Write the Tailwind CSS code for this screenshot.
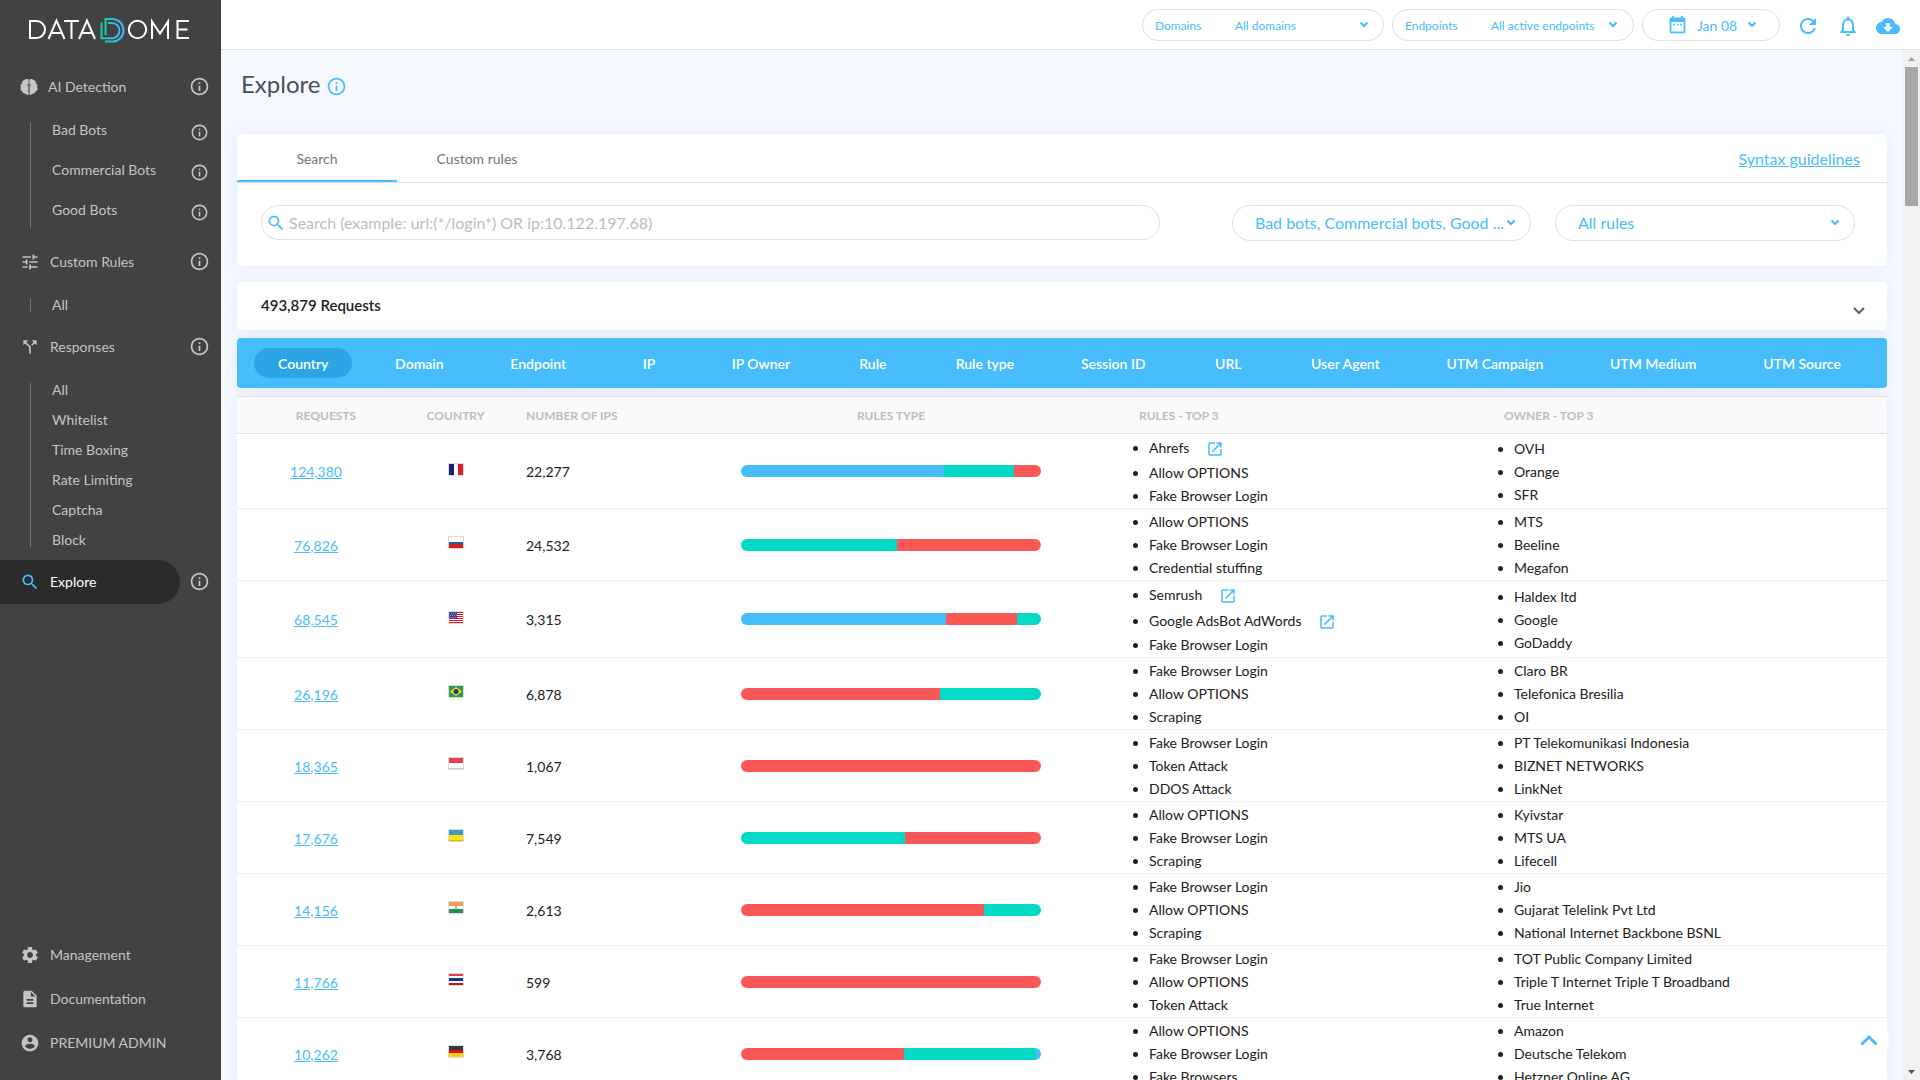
<!DOCTYPE html>
<html lang="en">
<head>
  <meta charset="UTF-8">
  <meta name="viewport" content="width=device-width, initial-scale=1.0">
  <title>DataDome - Explore</title>
  <script src="https://cdn.jsdelivr.net/npm/@tailwindcss/browser@4"></script>
</head>
<body class="h-screen overflow-hidden bg-[#f5f9ff] font-['Lato',sans-serif] text-sm text-[#212121]">
  <!-- Shared icons -->
  <svg class="hidden" aria-hidden="true">
    <symbol id="info" viewBox="0 0 24 24"><path d="M11 17h2v-6h-2v6zm1-15C6.480 2 2 6.480 2 12s4.480 10 10 10 10-4.480 10-10S17.520 2 12 2zm0 18c-4.410 0-8-3.590-8-8s3.590-8 8-8 8 3.590 8 8-3.590 8-8 8zM11 9h2V7h-2v2z"/></symbol>
    <symbol id="search" viewBox="0 0 24 24"><path d="M15.500 14h-.79l-.28-.27A6.471 6.471 0 0 0 16 9.500 6.500 6.500 0 1 0 9.500 16c1.610 0 3.090-.59 4.230-1.570l.27.28v.79l5 4.990L20.490 19l-4.990-5zm-6 0C7.010 14 5 11.990 5 9.500S7.010 5 9.500 5 14 7.010 14 9.500 11.990 14 9.500 14z"/></symbol>
    <symbol id="chevron" viewBox="0 0 10 10"><path d="M1.500 2.500L5 6l3.500-3.500" fill="none" stroke="currentColor" stroke-width="2.200"/></symbol>
    <symbol id="launch" viewBox="0 0 24 24"><path d="M19 19H5V5h7V3H5a2 2 0 0 0-2 2v14a2 2 0 0 0 2 2h14c1.100 0 2-.9 2-2v-7h-2v7zM14 3v2h3.590l-9.830 9.830 1.410 1.410L19 6.410V10h2V3h-7z"/></symbol>
  </svg>

  <div class="flex h-full">
    <!-- Sidebar -->
    <aside class="flex w-[221px] shrink-0 flex-col bg-[#424242] text-[#c4c4c4]">
      <a href="#" aria-label="DataDome" class="flex h-[65px] shrink-0 pt-[17px] pl-7">
        <svg class="h-[27px] w-[164px]" viewBox="0 0 164 27" fill="none" stroke="#fff" stroke-width="2">
          <defs><linearGradient id="dome" x1="0" x2="1"><stop offset="0" stop-color="#14cdb4"/><stop offset="1" stop-color="#46b4fa"/></linearGradient></defs>
          <path d="M2 4h6.500a8.500 8.500 0 0 1 0 17H2z"/>
          <path d="M20.500 22l8-18.500 8 18.500M23.500 16h10M36 4h15M43.500 4v18M51 22l8-18.500L67 22M54 16h10"/>
          <g stroke="url(#dome)" stroke-width="2">
            <path d="M77.500 18V2h7a11 11.300 0 0 1 0 22.600H77"/>
            <path d="M73.500 5.500v15.800h10.500a7.500 7.700 0 0 0 0-15.400H80"/>
          </g>
          <circle cx="109.500" cy="12.500" r="8.700"/>
          <path d="M124 22V4.500l8 12 8-12V22M161 4h-11.500v17H161M149.500 12.500h10"/>
        </svg>
      </a>
      <nav>
        <div class="flex h-11 items-center pr-[11px] pl-5">
          <svg class="mr-2.5 size-[18px]" viewBox="0 0 18 18" fill="currentColor"><path d="M8.700 1.500C7.700.5 5 .8 4.500 2 2.500 2.200 1.800 4 2.200 5 .5 6 .2 8 .8 9.300 0 11 .5 13 2.300 13.600 3 15.500 4.500 16 5.500 15.800c1 1.200 2.700 1.200 3.200.4zM9.300 1.500c1-1 3.700-.7 4.200.5 2 .2 2.700 2 2.300 3 1.700 1 2 3 1.400 4.300.8 1.700.3 3.700-1.500 4.300-.7 1.900-2.200 2.400-3.200 2.200-1 1.200-2.700 1.200-3.200.4z"/><path d="M7 7.500L9 6l2 1.500M9 6v9" stroke="#424242" fill="none" stroke-width=".8"/></svg>
          <a href="#" class="grow">AI Detection</a>
          <svg class="mb-0.5 size-[21px] fill-current"><use href="#info"/></svg>
        </div>
        <div class="mt-px mb-2.5 flex pl-[30px]">
          <div class="mt-3 mb-0.5 w-px bg-[#757575]"></div>
          <ul class="grow pr-3 pl-[21px] leading-10">
            <li class="flex items-center"><a href="#" class="grow">Bad Bots</a><svg class="mt-1 size-[19px] fill-current"><use href="#info"/></svg></li>
            <li class="flex items-center"><a href="#" class="grow">Commercial Bots</a><svg class="mt-1 size-[19px] fill-current"><use href="#info"/></svg></li>
            <li class="flex items-center"><a href="#" class="grow">Good Bots</a><svg class="mt-1 size-[19px] fill-current"><use href="#info"/></svg></li>
          </ul>
        </div>
        <div class="flex h-11 items-center pr-[11px] pl-5">
          <svg class="mr-2.5 size-5 fill-current" viewBox="0 0 24 24"><path d="M3 17v2h6v-2H3zM3 5v2h10V5H3zm10 16v-2h8v-2h-8v-2h-2v6h2zM7 9v2H3v2h4v2h2V9H7zm14 4v-2H11v2h10zm-6-4h2V7h4V5h-4V3h-2v6z"/></svg>
          <a href="#" class="grow">Custom Rules</a>
          <svg class="mb-0.5 size-[21px] fill-current"><use href="#info"/></svg>
        </div>
        <div class="mt-1.5 mb-[5px] flex pl-[30px]">
          <div class="my-2 w-px bg-[#757575]"></div>
          <ul class="grow pl-[21px] leading-[30px]"><li><a href="#">All</a></li></ul>
        </div>
        <div class="flex h-11 items-center pr-[11px] pl-5">
          <svg class="mr-2.5 size-5 fill-current" viewBox="0 0 24 24"><path d="M14 4l2.290 2.290-2.880 2.880 1.420 1.420 2.880-2.880L20 10V4h-6zm-4 0H4v6l2.290-2.290 4.710 4.700V20h2v-8.410l-5.290-5.300L10 4z"/></svg>
          <a href="#" class="grow">Responses</a>
          <svg class="mb-0.5 size-[21px] fill-current"><use href="#info"/></svg>
        </div>
        <div class="mt-1.5 mb-[5px] flex pl-[30px]">
          <div class="my-2 w-px bg-[#757575]"></div>
          <ul class="grow pl-[21px] leading-[30px]">
            <li><a href="#">All</a></li>
            <li><a href="#">Whitelist</a></li>
            <li><a href="#">Time Boxing</a></li>
            <li><a href="#">Rate Limiting</a></li>
            <li><a href="#">Captcha</a></li>
            <li><a href="#">Block</a></li>
          </ul>
        </div>
        <div class="flex items-center justify-between pr-[11px]">
          <a href="#" class="flex h-11 w-[180px] items-center rounded-r-full bg-[#2b2b2b] pl-5 text-white">
            <svg class="mr-2.5 size-5 fill-[#47bdfc]"><use href="#search"/></svg>
            Explore
          </a>
          <svg class="mb-0.5 size-[21px] fill-current"><use href="#info"/></svg>
        </div>
      </nav>
      <ul class="mt-auto mb-[15px]">
        <li><a href="#" class="flex h-11 items-center pl-5">
          <svg class="mr-2.5 size-5 fill-current" viewBox="0 0 24 24"><path d="M19.140 12.940c.04-.3.06-.61.06-.94 0-.32-.02-.64-.07-.94l2.030-1.580a.49.49 0 0 0 .12-.61l-1.920-3.320a.488.488 0 0 0-.59-.22l-2.390.96c-.5-.38-1.030-.7-1.620-.94l-.36-2.540a.484.484 0 0 0-.48-.41h-3.840c-.24 0-.43.17-.47.41l-.36 2.540c-.59.24-1.130.57-1.620.94l-2.390-.96c-.22-.08-.47 0-.59.22L2.740 8.870c-.12.21-.08.47.12.61l2.030 1.580c-.05.3-.09.63-.09.94s.02.64.07.94l-2.030 1.580a.49.49 0 0 0-.12.61l1.920 3.320c.12.22.37.29.59.22l2.390-.96c.5.38 1.030.7 1.620.94l.36 2.540c.05.24.24.41.48.41h3.840c.24 0 .44-.17.47-.41l.36-2.540c.59-.24 1.130-.56 1.620-.94l2.390.96c.22.08.47 0 .59-.22l1.920-3.320c.12-.22.07-.47-.12-.61l-2.010-1.580zM12 15.600c-1.980 0-3.600-1.620-3.600-3.600s1.620-3.600 3.600-3.600 3.600 1.620 3.600 3.600-1.620 3.600-3.600 3.600z"/></svg>
          Management
        </a></li>
        <li><a href="#" class="flex h-11 items-center pl-5">
          <svg class="mr-2.5 size-5 fill-current" viewBox="0 0 24 24"><path d="M14 2H6c-1.100 0-2 .9-2 2v16c0 1.100.9 2 2 2h12c1.100 0 2-.9 2-2V8l-6-6zm2 16H8v-2h8v2zm0-4H8v-2h8v2zm-3-5V3.500L18.500 9H13z"/></svg>
          Documentation
        </a></li>
        <li><a href="#" class="flex h-11 items-center pl-5">
          <svg class="mr-2.5 size-5 fill-current" viewBox="0 0 24 24"><path d="M12 2C6.480 2 2 6.480 2 12s4.480 10 10 10 10-4.480 10-10S17.520 2 12 2zm0 3c1.660 0 3 1.340 3 3s-1.340 3-3 3-3-1.340-3-3 1.340-3 3-3zm0 14.200a7.200 7.200 0 0 1-6-3.220c.03-1.990 4-3.080 6-3.080 1.990 0 5.970 1.090 6 3.080a7.200 7.200 0 0 1-6 3.220z"/></svg>
          PREMIUM ADMIN
        </a></li>
      </ul>
    </aside>

    <div class="flex min-w-0 grow flex-col">
      <!-- Top bar -->
      <header class="flex h-[50px] shrink-0 items-center justify-end gap-2 border-b border-[#e0e0e0] bg-white pr-5 text-xs text-[#47bdfc]">
        <button class="flex h-8 w-[242px] items-center rounded-full border border-[#e0e0e0] pr-3.5 pl-3">
          <span class="w-20 pt-0.5 text-left">Domains</span>
          <span class="grow pt-0.5 text-left">All domains</span>
          <svg class="size-2.5"><use href="#chevron"/></svg>
        </button>
        <button class="flex h-8 w-[242px] items-center rounded-full border border-[#e0e0e0] pr-[15px] pl-3">
          <span class="w-[86px] pt-0.5 text-left">Endpoints</span>
          <span class="grow pt-0.5 text-left">All active endpoints</span>
          <svg class="size-2.5"><use href="#chevron"/></svg>
        </button>
        <button class="mr-2 flex h-8 w-[138px] items-center rounded-full border border-[#e0e0e0] pl-6 text-sm">
          <svg class="mr-[9px] size-[21px] fill-current" viewBox="0 0 24 24"><path d="M9 11H7v2h2v-2zm4 0h-2v2h2v-2zm4 0h-2v2h2v-2zm2-7h-1V2h-2v2H8V2H6v2H5c-1.110 0-1.990.9-1.990 2L3 20a2 2 0 0 0 2 2h14c1.100 0 2-.9 2-2V6c0-1.100-.9-2-2-2zm0 16H5V9h14v11z"/></svg>
          <span class="pt-0.5">Jan 08</span>
          <svg class="ml-2.5 size-2.5"><use href="#chevron"/></svg>
        </button>
        <div class="flex items-center gap-4 pt-0.5">
          <button aria-label="Refresh"><svg class="size-6 fill-current" viewBox="0 0 24 24"><path d="M17.650 6.350A7.958 7.958 0 0 0 12 4c-4.420 0-7.990 3.580-7.990 8s3.570 8 7.990 8c3.730 0 6.840-2.550 7.730-6h-2.080A5.990 5.990 0 0 1 12 18c-3.310 0-6-2.690-6-6s2.690-6 6-6c1.660 0 3.140.69 4.220 1.780L13 11h7V4l-2.350 2.350z"/></svg></button>
          <button aria-label="Notifications"><svg class="size-6 fill-current" viewBox="0 0 24 24"><path d="M12 22c1.100 0 2-.9 2-2h-4c0 1.100.9 2 2 2zm6-6v-5c0-3.070-1.630-5.640-4.500-6.320V4c0-.83-.67-1.500-1.500-1.500s-1.500.67-1.500 1.500v.68C7.640 5.360 6 7.920 6 11v5l-2 2v1h16v-1l-2-2zm-2 1H8v-6c0-2.480 1.510-4.500 4-4.500s4 2.020 4 4.500v6z"/></svg></button>
          <button aria-label="Download"><svg class="size-6 fill-current" viewBox="0 0 24 24"><path d="M19.350 10.040A7.490 7.490 0 0 0 12 4C9.110 4 6.600 5.640 5.350 8.040A5.994 5.994 0 0 0 0 14c0 3.310 2.690 6 6 6h13c2.760 0 5-2.240 5-5 0-2.640-2.050-4.780-4.650-4.960zM17 13l-5 5-5-5h3V9h4v4h3z"/></svg></button>
        </div>
      </header>

      <div class="flex min-h-0 grow">
        <main class="min-w-0 grow overflow-hidden px-4">
          <div class="flex h-[84px] items-start gap-1.5 pt-[18px] pl-1">
            <h1 class="text-2xl leading-8 text-[#4a4f57]">Explore</h1>
            <svg class="mt-2 size-[21px] fill-[#47bdfc]"><use href="#info"/></svg>
          </div>

          <!-- Search -->
          <section class="mb-4 h-[132px] rounded bg-white shadow-[0_0_16px_rgba(40,50,150,0.08)]">
            <div class="flex h-[49px] items-center border-b border-[#e0e0e0] text-[#757575]">
              <button class="h-12 w-40 border-b-2 border-[#47bdfc] pt-1">Search</button>
              <button class="h-12 w-40 pt-0.5">Custom rules</button>
              <a href="#" class="mr-[27px] ml-auto pt-0.5 text-base text-[#47bdfc] underline">Syntax guidelines</a>
            </div>
            <div class="flex items-start pt-[22px] pr-8 pl-6">
              <label class="flex h-[35px] w-[899px] shrink items-center rounded-full border border-[#e0e0e0] pl-1">
                <svg class="mr-[3px] size-5 shrink-0 fill-[#47bdfc]"><use href="#search"/></svg>
                <input type="text" aria-label="Search" placeholder="Search (example: url:(*/login*) OR ip:10.122.197.68)" class="min-w-0 grow text-base outline-none placeholder:text-[#bdbdbd]">
              </label>
              <button class="ml-auto flex h-9 w-[299px] items-center justify-between rounded-full border border-[#e0e0e0] pr-3.5 pl-[22px] text-base text-[#47bdfc]">
                <span class="truncate">Bad bots, Commercial bots, Good ...</span>
                <svg class="size-2.5 shrink-0"><use href="#chevron"/></svg>
              </button>
              <button class="ml-6 flex h-9 w-[300px] items-center justify-between rounded-full border border-[#e0e0e0] pr-3.5 pl-[22px] text-base text-[#47bdfc]">
                <span>All rules</span>
                <svg class="size-2.5 shrink-0"><use href="#chevron"/></svg>
              </button>
            </div>
          </section>

          <section class="mb-2 flex h-12 items-center justify-between rounded bg-white pr-5 pl-6 shadow-[0_0_16px_rgba(40,50,150,0.08)]">
            <h2 class="text-[15px] font-semibold">493,879 Requests</h2>
            <button aria-label="Expand"><svg class="mt-2.5 size-4 text-[#616161]" viewBox="0 0 16 16"><path d="M3 5l5 5 5-5" fill="none" stroke="currentColor" stroke-width="2"/></svg></button>
          </section>

          <!-- Group by -->
          <div class="mb-2 flex h-[50px] items-center justify-between rounded bg-[#47bdfc] pr-[22px] pl-[17px] font-semibold text-white shadow-[0_0_16px_rgba(40,50,150,0.08)]">
            <button class="h-[30px] min-w-20 rounded-full bg-[#2ba5e5] px-6 pt-0.5">Country</button>
            <button class="h-[30px] min-w-20 px-6 pt-0.5">Domain</button>
            <button class="h-[30px] min-w-20 px-6 pt-0.5">Endpoint</button>
            <button class="h-[30px] min-w-20 px-6 pt-0.5">IP</button>
            <button class="h-[30px] min-w-20 px-6 pt-0.5">IP Owner</button>
            <button class="h-[30px] min-w-20 px-6 pt-0.5">Rule</button>
            <button class="h-[30px] min-w-20 px-6 pt-0.5">Rule type</button>
            <button class="h-[30px] min-w-20 px-6 pt-0.5">Session ID</button>
            <button class="h-[30px] min-w-20 px-6 pt-0.5">URL</button>
            <button class="h-[30px] min-w-20 px-6 pt-0.5">User Agent</button>
            <button class="h-[30px] min-w-20 px-6 pt-0.5">UTM Campaign</button>
            <button class="h-[30px] min-w-20 px-6 pt-0.5">UTM Medium</button>
            <button class="h-[30px] min-w-20 px-6 pt-0.5">UTM Source</button>
          </div>

          <div class="bg-white shadow-[0_0_16px_rgba(40,50,150,0.08)]">
            <table class="w-full table-fixed border-separate border-spacing-0">
              <thead>
                <tr class="h-[38px] bg-[#f8fafc] text-left text-xs text-[#bdbdbd] *:border-y *:border-[#e0e0e0] *:pt-0.5">
                  <th class="w-[158px] pl-5 text-center font-bold">REQUESTS</th>
                  <th class="w-[121px] text-center font-bold">COUNTRY</th>
                  <th class="w-[214px] pl-2.5 font-bold">NUMBER OF IPS</th>
                  <th class="w-[322px] text-center font-bold">RULES TYPE</th>
                  <th class="pl-[87px] font-bold">RULES - TOP 3</th>
                  <th class="w-[383px] font-bold">OWNER - TOP 3</th>
                </tr>
              </thead>
              <tbody id="rows"></tbody>
            </table>
          </div>
        </main>

        <!-- Scrollbar -->
        <div class="flex w-[17px] shrink-0 flex-col items-center justify-between bg-[#f1f1f1]">
          <div class="flex flex-col items-center">
            <svg class="size-[17px] fill-[#a3a3a3]" viewBox="0 0 17 17"><path d="M5 11l3.500-4 3.500 4z"/></svg>
            <div class="h-[139px] w-[13px] bg-[#a8a8a8]"></div>
          </div>
          <svg class="size-[17px] fill-[#505050]" viewBox="0 0 17 17"><path d="M5 7l3.500 4L12 7z"/></svg>
        </div>
      </div>
    </div>
  </div>

  <button aria-label="Back to top" class="fixed right-[31px] bottom-5 flex size-10 items-center justify-center rounded-full bg-white">
    <svg class="h-3 w-[18px]" viewBox="0 0 18 12"><path d="M1.500 10.500L9 3l7.500 7.500" fill="none" stroke="#47bdfc" stroke-width="3"/></svg>
  </button>

  <script>
    const flags = {
      fr: '<path fill="#1a1f7a" d="M0 0h5v11H0z"/><path fill="#fff" d="M5 0h4v11H5z"/><path fill="#dd1f33" d="M9 0h5v11H9z"/>',
      ru: '<path fill="#fff" d="M0 0h14v5H0z"/><path fill="#1c5fb0" d="M0 5h14v2H0z"/><path fill="#dc1a1f" d="M0 7h14v4H0z"/>',
      us: '<path fill="#fff" d="M0 0h14v11H0z"/><path stroke="#d8192c" d="M0 .5h14M0 2.500h14M0 4.500h14M0 6.500h14M0 8.500h14M0 10.500h14"/><path fill="#3b3f94" d="M0 0h8v6H0z"/><path stroke="#c5c8ea" stroke-dasharray="1 1" d="M0 1.500h8M1 3.500h7M0 5.500h8" stroke-width=".6"/>',
      br: '<path fill="#2c9a55" d="M0 0h14v11H0z"/><path fill="#f5d920" d="M1 5.500L7 1l6 4.500L7 10z"/><circle cx="7" cy="5.500" r="2.500" fill="#22397f"/>',
      id: '<path fill="#e5414c" d="M0 0h14v5H0z"/><path fill="#fff" d="M0 5h14v5H0z"/><path fill="#d0d0d0" d="M0 10h14v1H0z"/>',
      ua: '<path fill="#3e93c8" d="M0 0h14v5H0z"/><path fill="#fce300" d="M0 5h14v5H0z"/><path fill="#d3bc10" d="M0 10h14v1H0z"/>',
      in: '<path fill="#f29a4f" d="M0 0h14v4H0z"/><path fill="#fff" d="M0 4h14v3H0z"/><path fill="#22924f" d="M0 7h14v4H0z"/><circle cx="7" cy="5.500" r="1.200" fill="#8f95c9"/>',
      th: '<path fill="#e23b46" d="M0 0h14v2H0z"/><path fill="#fff" d="M0 2h14v2H0zM0 7h14v2H0z"/><path fill="#173a8c" d="M0 4h14v3H0z"/><path fill="#c9141f" d="M0 9h14v2H0z"/>',
      de: '<path fill="#3a3a3a" d="M0 0h14v4H0z"/><path fill="#dd1017" d="M0 4h14v3H0z"/><path fill="#f8d010" d="M0 7h14v4H0z"/>',
    };
    const colors = { b: 'bg-[#47bdfc]', g: 'bg-[#03dac6]', r: 'bg-[#fa5757]' };

    // requests, flag, ips, bar parts in %, rules (* = has a link), owners
    const rows = [
      ['124,380', 'fr', '22,277', [['b', 67.6], ['g', 23.4], ['r', 9]], ['Ahrefs*', 'Allow OPTIONS', 'Fake Browser Login'], ['OVH', 'Orange', 'SFR']],
      ['76,826', 'ru', '24,532', [['g', 52.1], ['r', 47.5], ['b', 0.4]], ['Allow OPTIONS', 'Fake Browser Login', 'Credential stuffing'], ['MTS', 'Beeline', 'Megafon']],
      ['68,545', 'us', '3,315', [['b', 68.3], ['r', 23.8], ['g', 7.9]], ['Semrush*', 'Google AdsBot AdWords*', 'Fake Browser Login'], ['Haldex ltd', 'Google', 'GoDaddy']],
      ['26,196', 'br', '6,878', [['r', 66.4], ['g', 33.6]], ['Fake Browser Login', 'Allow OPTIONS', 'Scraping'], ['Claro BR', 'Telefonica Bresilia', 'OI']],
      ['18,365', 'id', '1,067', [['r', 100]], ['Fake Browser Login', 'Token Attack', 'DDOS Attack'], ['PT Telekomunikasi Indonesia', 'BIZNET NETWORKS', 'LinkNet']],
      ['17,676', 'ua', '7,549', [['g', 54.7], ['r', 45.3]], ['Allow OPTIONS', 'Fake Browser Login', 'Scraping'], ['Kyivstar', 'MTS UA', 'Lifecell']],
      ['14,156', 'in', '2,613', [['r', 81], ['g', 19]], ['Fake Browser Login', 'Allow OPTIONS', 'Scraping'], ['Jio', 'Gujarat Telelink Pvt Ltd', 'National Internet Backbone BSNL']],
      ['11,766', 'th', '599', [['r', 100]], ['Fake Browser Login', 'Allow OPTIONS', 'Token Attack'], ['TOT Public Company Limited', 'Triple T Internet Triple T Broadband', 'True Internet']],
      ['10,262', 'de', '3,768', [['r', 54.3], ['g', 44.2], ['b', 1.5]], ['Allow OPTIONS', 'Fake Browser Login', 'Fake Browsers'], ['Amazon', 'Deutsche Telekom', 'Hetzner Online AG']],
    ];

    const rule = (name) => name.endsWith('*')
      ? `<li class="leading-[25px] first:pb-px">${name.slice(0, -1)}<a href="#" aria-label="Open" class="ml-[17px] inline-block align-middle"><svg class="size-[18px] fill-[#47bdfc]"><use href="#launch"/></svg></a></li>`
      : `<li>${name}</li>`;

    document.getElementById('rows').innerHTML = rows.map(([requests, flag, ips, bar, rules, owners]) => `
      <tr class="*:border-b *:border-[#eeeeee] *:py-px">
        <td class="text-center"><a href="#" class="inline-block pt-0.5 text-[#47bdfc] underline">${requests}</a></td>
        <td><svg class="mx-auto mb-1 h-[13px] w-4" viewBox="-1 -1 16 13"><rect x="-1" y="-1" width="16" height="13" rx="1" fill="#dcdcdc"/>${flags[flag]}</svg></td>
        <td><span class="inline-block pt-0.5 pl-2.5">${ips}</span></td>
        <td><div class="mx-auto flex h-3 w-[300px] overflow-hidden rounded-full">${bar.map(([c, w]) => `<div class="${colors[c]}" style="width:${w}%"></div>`).join('')}</div></td>
        <td><ul class="list-disc pl-[97px] leading-[23px]">${rules.map(rule).join('')}</ul></td>
        <td><ul class="list-disc pl-2.5 leading-[23px]">${owners.map((o) => `<li>${o}</li>`).join('')}</ul></td>
      </tr>`).join('');
  </script>
</body>
</html>
